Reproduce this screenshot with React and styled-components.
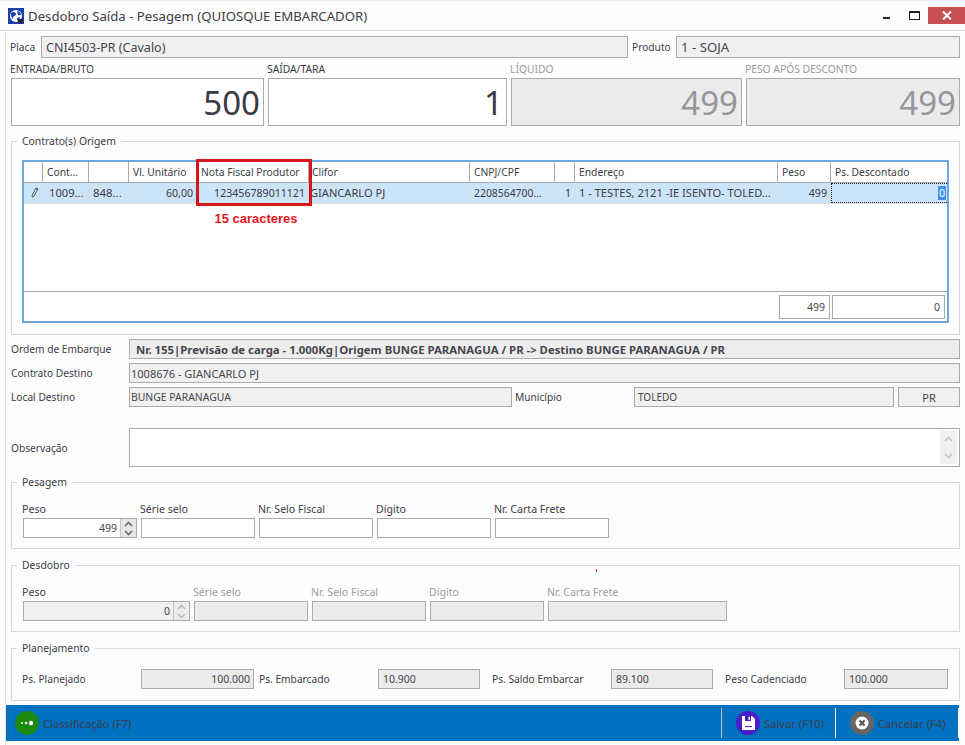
import React from "react";
import styled, { createGlobalStyle } from "styled-components";

const Global = createGlobalStyle`
  html, body { margin: 0; padding: 0; background: #fff; }
  body { font-family: "Noto Sans", "Open Sans", sans-serif; font-size: 10.2px; color: #3c3c46; }
  * { box-sizing: border-box; }
`;

const Win = styled.div`width: 965px; height: 745px; display: flex; flex-direction: column; background: #fff; overflow: hidden;`;
const TitleBar = styled.div`height: 31px; flex: none; display: flex; align-items: center; background: #fcfcfc; border-top: 1px solid #ededed; border-bottom: 1px solid #d8d8d8; padding-left: 8px;`;
const Title = styled.div`margin-left: 4px; font-size: 13.2px; color: #3f3f48; flex: 1; margin-top: 1px; white-space: nowrap;`;
const WinButtons = styled.div`display: flex; align-items: flex-start; height: 100%; padding-top: 6px;`;
const WinBtn = styled.div`width: ${p => p.$w}px; height: 17px; margin-right: ${p => p.$mr || 0}px; display: flex; align-items: center; justify-content: center; background: ${p => p.$bg || "transparent"};`;
const Body = styled.div`flex: 1; display: flex; flex-direction: column; margin-left: 5px; border-left: 1px solid #e2e2e2; padding-top: 5px; background: #fdfdfd;`;
const Row = styled.div`display: grid; grid-template-columns: ${p => p.$cols}; height: ${p => p.$h || 20}px; margin-top: ${p => p.$mt || 0}px; padding-left: ${p => p.$pl || 0}px; align-items: stretch;`;
const Label = styled.div`display: flex; align-items: center; color: ${p => p.$off ? "#9b9ba3" : "#3c3c46"}; white-space: nowrap; padding-left: ${p => p.$pl || 0}px; font-size: 10.2px;`;
const Input = styled.div`
  border: 1px solid #ababab;
  background: ${p => p.$bg || "#fff"};
  display: flex; align-items: center; overflow: hidden; white-space: nowrap;
  justify-content: ${p => p.$center ? "center" : p.$right ? "flex-end" : "flex-start"};
  padding: 0 ${p => p.$padr ?? 3}px 0 ${p => p.$pad ?? 3}px;
  font-size: ${p => p.$fs || 10.5}px; font-weight: ${p => p.$bold ? 700 : 400};
  color: #45454e;
`;
const BigRow = styled.div`display: grid; grid-template-columns: 253px 239px 231px 214px; gap: 4px; margin: 5px 0 0 5px;`;
const BigCol = styled.div`display: flex; flex-direction: column;`;
const BigLabel = styled.div`height: 15px; padding-bottom: 4px; margin-left: -1px; display: flex; align-items: center; font-size: 10.3px; color: ${p => p.$off ? "#9b9ba3" : "#3c3c46"};`;
const BigBox = styled.div`
  height: 48px; border: 1px solid #ababab; background: ${p => p.$off ? "#ebebeb" : "#fff"};
  color: ${p => p.$off ? "#96969c" : "#3a3a44"}; font-size: 33px; line-height: 48px; text-align: right; padding-right: 3px;
`;
const Group = styled.fieldset`
  margin: ${p => p.$mt || 0}px 0 0 5px; width: 949px; height: ${p => p.$h}px; border: 1px solid #d8d8d8; padding: 0 10px; min-width: 0;
  position: relative; background: transparent;
`;
const Legend = styled.legend`margin-left: -5px; padding: 0 5px; font-size: 10.4px; color: #3c3c46; line-height: 13px;`;

const GridWrap = styled.div`position: relative; margin-top: ${p => p.$mt}px; width: 927px; height: 163px; border: 2px solid #6fa6e0; display: flex; flex-direction: column; background: #fff;`;
const colsT = "19px 46px 40px 68px 112px 161px 85px 20px 203px 53px 116px";
const GridRow = styled.div`display: grid; grid-template-columns: ${colsT}; height: ${p => p.$h}px; flex: none; background: ${p => p.$bg || "#fff"}; border-bottom: 1px solid ${p => p.$line};`;
const HeadCell = styled.div`border-right: 1px solid #ababab; padding-left: ${p => p.$pl ?? 4}px; display: flex; align-items: center; font-size: 10.3px; white-space: nowrap; overflow: hidden; &:last-child { border-right: none; }`;
const DataCell = styled.div`
  border-right: 1px solid #dcdcdc; padding: 0 ${p => p.$padr ?? 3}px 1px ${p => p.$pad ?? 3}px; display: flex; align-items: center; white-space: nowrap; overflow: hidden; font-size: ${p => p.$fs || 10.6}px;
  justify-content: ${p => p.$right ? "flex-end" : "flex-start"};
  &:last-child { border-right: none; }
`;
const FocusCell = styled(DataCell)`border: 1px dotted #222; padding: 0 1px; justify-content: flex-end;`;
const Sel = styled.span`background: #3d8ff0; color: #fff; padding: 0 1px; line-height: 14px;`;
const Spacer = styled.div`flex: 1;`;
const GridFoot = styled.div`height: 30px; flex: none; border-top: 1px solid #ababab; display: flex; justify-content: flex-end; gap: 2px; padding: 3px 2px 0 0;`;
const FootBox = styled(Input)`height: 24px; width: ${p => p.$w}px; font-size: 10.5px; padding: 0 4px;`;
const RedBox = styled.div`position: absolute; left: 172px; top: -3px; width: 116px; height: 47px; border: 3px solid #d6141c; pointer-events: none;`;
const RedNote = styled.div`position: absolute; left: 172px; top: 49px; width: 120px; text-align: center; color: #e8141c; font-weight: 700; font-size: 13px; font-family: "Liberation Sans", sans-serif;`;

const Fields = styled.div`display: grid; grid-template-columns: ${p => p.$cols}; gap: 0 4px; margin-top: ${p => p.$mt || 0}px; padding-left: 1px;`;
const FieldCol = styled.div`display: flex; flex-direction: column;`;
const FieldLabel = styled.div`height: 16px; margin-left: -1px; padding-bottom: 3px; display: flex; align-items: center; font-size: 10.6px; color: ${p => p.$off ? "#9b9ba3" : "#3c3c46"};`;
const FieldInput = styled(Input)`height: 20px;`;
const SpinWrap = styled.div`height: 20px; display: flex; border: 1px solid #ababab; background: ${p => p.$off ? "#f0f0f0" : "#fff"};`;
const SpinVal = styled.div`flex: 1; display: flex; align-items: center; justify-content: flex-end; padding-right: 3px; font-size: 10.5px; color: #45454e;`;
const SpinBtns = styled.div`width: 16px; flex: none; display: flex; flex-direction: column; align-items: center; justify-content: space-around; background: ${p => p.$off ? "#ececec" : "#e6e6e6"}; border-left: 1px solid #c4c4c4; color: ${p => p.$off ? "#b8b8b8" : "#666"};`;
const Dot = styled.div`position: absolute; left: 584px; top: -3px; width: 1px; height: 3px; background: #e01c24;`;
const PrWrap = styled.div`display: flex; flex-direction: column; padding-left: 4px; & > * { flex: 1; }`;
const PlanRow = styled.div`display: grid; grid-template-columns: 119px 113px 124px 102px 131px 102px 131px 104px; height: 20px; margin-top: 14px;`;

const Bar = styled.div`height: 36px; flex: none; margin-top: 4px; width: 953px; background: #0070c0; display: flex; align-items: center; color: #3d3d4d; font-size: 11.2px;`;
const BarBtn = styled.div`display: flex; align-items: center; gap: 4px; padding-left: ${p => p.$pl || 0}px; width: ${p => p.$w ? `${p.$w}px` : "auto"}; flex: ${p => p.$w ? "none" : 1}; height: 100%;`;
const Circle = styled.div`width: 24px; height: 24px; border-radius: 50%; background: ${p => p.$bg}; display: flex; align-items: center; justify-content: center; flex: none;`;
const Sep = styled.div`width: 1px; height: 30px; background: ${p => p.$c}; flex: none;`;

const Chevron = ({ up }) => (
  <svg width="9" height="6" viewBox="0 0 9 6" fill="none" stroke="currentColor" strokeWidth="1.6">
    <path d={up ? "M1 5l3.5-3.5L8 5" : "M1 1l3.5 3.5L8 1"} />
  </svg>
);

const Spin = ({ off }) => (
  <SpinBtns $off={off}><Chevron up /><Chevron /></SpinBtns>
);

const ObsBox = styled(Input)`height: 39px; justify-content: flex-end; padding: 2px 2px 2px 0;`;
const ScrollBar = styled.div`width: 17px; height: 100%; background: #f0f0f0; display: flex; flex-direction: column; align-items: center; justify-content: space-around; color: #c4c4c4;`;

const pesagem = ["Série selo", "Nr. Selo Fiscal", "Dígito", "Nr. Carta Frete"];

export default function App() {
  return (
    <Win>
      <Global />
      <TitleBar>
        <svg width="16" height="16" viewBox="0 0 16 16">
          <rect width="16" height="16" fill="#1b3fa8" />
          <circle cx="8" cy="8" r="6" fill="#fff" />
          <path d="M3 5c2-2 5-1 5 1s-3 2-3 4-2 0-2-5zM9 3c2 0 4 2 4 4l-3 0zM9 10l3-1-1 4-2-1z" fill="#1b3fa8" />
          <rect x="10" y="11" width="5" height="4" fill="#222" />
        </svg>
        <Title>Desdobro Saída - Pesagem (QUIOSQUE EMBARCADOR)</Title>
        <WinButtons>
          <WinBtn $w={8} $mr={18}>
            <svg width="8" height="8" viewBox="0 0 8 8"><rect y="5" width="7" height="2" fill="#222" /></svg>
          </WinBtn>
          <WinBtn $w={11} $mr={8}>
            <svg width="11" height="9" viewBox="0 0 11 9"><rect x=".5" y=".5" width="10" height="8" fill="none" stroke="#222" /><rect width="11" height="2" fill="#222" /></svg>
          </WinBtn>
          <WinBtn $w={37} $bg="#c75050">
            <svg width="10" height="9" viewBox="0 0 10 9" stroke="#fff" strokeWidth="2"><path d="M1 .5l8 8M9 .5l-8 8" /></svg>
          </WinBtn>
        </WinButtons>
      </TitleBar>
      <Body>
        <Row $cols="31px 587px 48px 284px" $h={22} $pl={4}>
          <Label>Placa</Label>
          <Input $bg="#f0f0f0" $fs={12.5} $pad={4}>CNI4503-PR (Cavalo)</Input>
          <Label $pl={4}>Produto</Label>
          <Input $bg="#f0f0f0" $fs={13.2} $pad={4}>1 - SOJA</Input>
        </Row>
        <BigRow>
          <BigCol><BigLabel>ENTRADA/BRUTO</BigLabel><BigBox>500</BigBox></BigCol>
          <BigCol><BigLabel>SAÍDA/TARA</BigLabel><BigBox>1</BigBox></BigCol>
          <BigCol><BigLabel $off>LÍQUIDO</BigLabel><BigBox $off>499</BigBox></BigCol>
          <BigCol><BigLabel $off>PESO APÓS DESCONTO</BigLabel><BigBox $off>499</BigBox></BigCol>
        </BigRow>
        <Group $mt={9} $h={200}>
          <Legend>Contrato(s) Origem</Legend>
          <GridWrap $mt={12}>
            <GridRow $h={21} $line="#ababab">
              <HeadCell /><HeadCell>Cont...</HeadCell><HeadCell /><HeadCell>Vl. Unitário</HeadCell>
              <HeadCell>Nota Fiscal Produtor</HeadCell><HeadCell $pl={3}>Clifor</HeadCell><HeadCell>CNPJ/CPF</HeadCell><HeadCell />
              <HeadCell>Endereço</HeadCell><HeadCell>Peso</HeadCell><HeadCell>Ps. Descontado</HeadCell>
            </GridRow>
            <GridRow $h={21} $bg="#cce4f7" $line="#dcdcdc">
              <DataCell $right>
                <svg width="9" height="11" viewBox="0 0 9 11" fill="none" stroke="#555" strokeWidth="1"><path d="M6 1L2 8.5 2.5 10 4 9 8 2zM5.5 1.5l2 1" /></svg>
              </DataCell>
              <DataCell $pad={6} $fs={11.2}>1009...</DataCell>
              <DataCell $pad={4} $fs={11.4}>848...</DataCell>
              <DataCell $right>60,00</DataCell>
              <DataCell $right>123456789011121</DataCell>
              <DataCell $pad={1} $fs={11.1}>GIANCARLO PJ</DataCell>
              <DataCell $pad={4} $fs={10.4}>2208564700...</DataCell>
              <DataCell $right>1</DataCell>
              <DataCell $pad={4} $fs={11.1}>1 - TESTES, 2121 -IE ISENTO- TOLED...</DataCell>
              <DataCell $right>499</DataCell>
              <FocusCell><Sel>0</Sel></FocusCell>
            </GridRow>
            <Spacer />
            <GridFoot>
              <FootBox $right $w={51}>499</FootBox>
              <FootBox $right $w={113}>0</FootBox>
            </GridFoot>
            <RedBox />
            <RedNote>15 caracteres</RedNote>
          </GridWrap>
        </Group>
        <Row $cols="118px 831px" $h={20} $mt={4} $pl={5}>
          <Label>Ordem de Embarque</Label>
          <Input $bg="#ededed" $bold $fs={11.35} $pad={6}>Nr. 155|Previsão de carga - 1.000Kg|Origem BUNGE PARANAGUA / PR -&gt; Destino BUNGE PARANAGUA / PR</Input>
        </Row>
        <Row $cols="118px 831px" $h={20} $mt={4} $pl={5}>
          <Label>Contrato Destino</Label>
          <Input $bg="#f0f0f0" $fs={11} $pad={1}>1008676 - GIANCARLO PJ</Input>
        </Row>
        <Row $cols="118px 383px 122px 260px 66px" $h={20} $mt={4} $pl={5}>
          <Label>Local Destino</Label>
          <Input $bg="#f0f0f0" $fs={10.4} $pad={1}>BUNGE PARANAGUA</Input>
          <Label $pl={3}>Município</Label>
          <Input $bg="#f0f0f0" $fs={10} $pad={3}>TOLEDO</Input>
          <PrWrap><Input $bg="#f0f0f0" $center $fs={11}>PR</Input></PrWrap>
        </Row>
        <Row $cols="118px 831px" $h={39} $mt={21} $pl={5}>
          <Label>Observação</Label>
          <ObsBox>
            <ScrollBar><Chevron up /><Chevron /></ScrollBar>
          </ObsBox>
        </Row>
        <Group $mt={9} $h={73}>
          <Legend>Pesagem</Legend>
          <Fields $cols="114px 114px 114px 114px 114px" $mt={13}>
            <FieldCol>
              <FieldLabel>Peso</FieldLabel>
              <SpinWrap><SpinVal>499</SpinVal><Spin /></SpinWrap>
            </FieldCol>
            {pesagem.map(t => (
              <FieldCol key={t}><FieldLabel>{t}</FieldLabel><FieldInput /></FieldCol>
            ))}
          </Fields>
        </Group>
        <Group $mt={10} $h={73}>
          <Legend>Desdobro</Legend>
          <Dot />
          <Fields $cols="167px 114px 114px 114px 179px" $mt={13}>
            <FieldCol>
              <FieldLabel>Peso</FieldLabel>
              <SpinWrap $off><SpinVal>0</SpinVal><Spin off /></SpinWrap>
            </FieldCol>
            {pesagem.map(t => (
              <FieldCol key={t}><FieldLabel $off>{t}</FieldLabel><FieldInput $bg="#ebebeb" /></FieldCol>
            ))}
          </Fields>
        </Group>
        <Group $mt={10} $h={59}>
          <Legend>Planejamento</Legend>
          <PlanRow>
            <Label>Ps. Planejado</Label>
            <Input $bg="#ebebeb" $right $fs={10.5}>100.000</Input>
            <Label $pl={5}>Ps. Embarcado</Label>
            <Input $bg="#ebebeb" $fs={10.5} $pad={4}>10.900</Input>
            <Label $pl={12}>Ps. Saldo Embarcar</Label>
            <Input $bg="#ebebeb" $fs={10.5} $pad={4}>89.100</Input>
            <Label $pl={12}>Peso Cadenciado</Label>
            <Input $bg="#ebebeb" $fs={10.5} $pad={4}>100.000</Input>
          </PlanRow>
        </Group>
        <Bar>
          <BarBtn $pl={9}>
            <Circle $bg="#1c8a10">
              <svg width="16" height="6" viewBox="0 0 16 6" fill="#fff"><circle cx="3" cy="3" r="1" /><circle cx="7" cy="3" r="1.2" /><circle cx="12" cy="3" r="2.2" /></svg>
            </Circle>
            Classificação (F7)
          </BarBtn>
          <Sep $c="#b8bcc0" />
          <BarBtn $w={113} $pl={14}>
            <Circle $bg="#4a1ec8">
              <svg width="13" height="14" viewBox="0 0 13 14">
                <path fill="#fff" d="M0 0h10l3 3v11H0z" />
                <path fill="#4a1ec8" d="M3 0h6v5H3zM3 10h7v1H3z" />
                <path fill="#fff" d="M6.5 1H8v3H6.5z" />
              </svg>
            </Circle>
            Salvar (F10)
          </BarBtn>
          <Sep $c="#f4f4f4" />
          <BarBtn $w={122} $pl={14}>
            <Circle $bg="#666">
              <svg width="14" height="14" viewBox="0 0 14 14"><circle cx="7" cy="7" r="6.5" fill="#fff" /><path d="M4.5 4.5l5 5M9.5 4.5l-5 5" stroke="#555" strokeWidth="2.2" /></svg>
            </Circle>
            Cancelar (F4)
          </BarBtn>
          <Sep $c="#f4f4f4" />
        </Bar>
      </Body>
    </Win>
  );
}
